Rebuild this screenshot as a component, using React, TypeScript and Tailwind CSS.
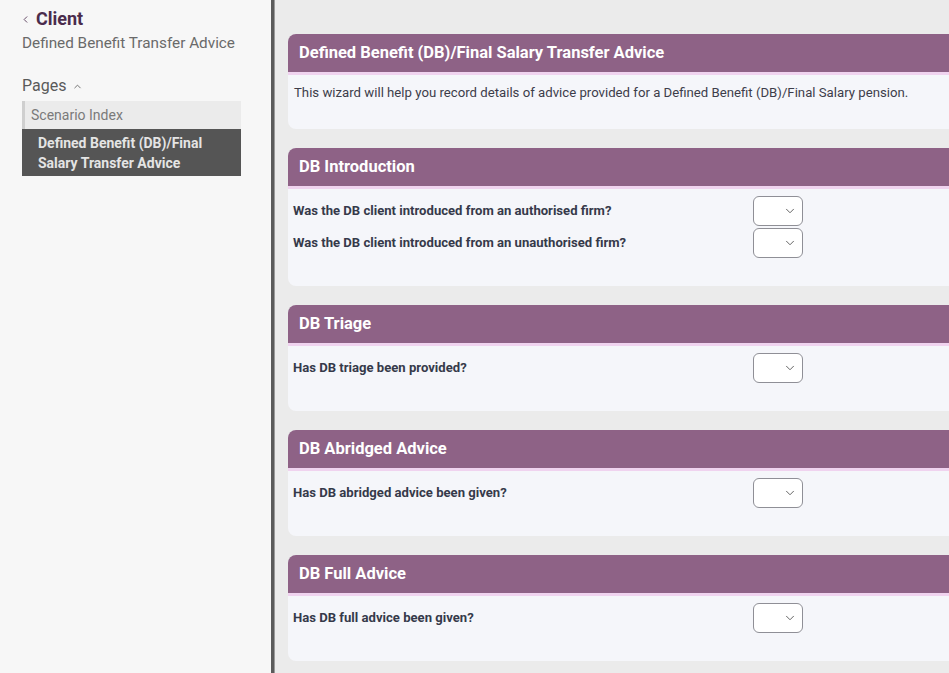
import { ChevronDown, ChevronLeft, ChevronUp } from "lucide-react";

const sections = [
  {
    title: "DB Introduction",
    questions: [
      "Was the DB client introduced from an authorised firm?",
      "Was the DB client introduced from an unauthorised firm?",
    ],
  },
  { title: "DB Triage", questions: ["Has DB triage been provided?"] },
  { title: "DB Abridged Advice", questions: ["Has DB abridged advice been given?"] },
  { title: "DB Full Advice", questions: ["Has DB full advice been given?"] },
];

function CardHeader({ title }: { title: string }) {
  return (
    <div className="box-content flex h-[38px] items-center rounded-t-lg border-b-[3px] border-[#f0d3ef] bg-[#8e6286] px-[11px]">
      <h2 className="text-[16.5px] font-bold text-white">{title}</h2>
    </div>
  );
}

function Select() {
  return (
    <div className="flex h-[30px] w-[50px] items-center justify-end rounded-md border border-[#8f8f96] bg-white pr-[5px]">
      <ChevronDown className="h-[14px] w-[14px] text-[#4f4f4f]" strokeWidth={1.5} />
    </div>
  );
}

export default function App() {
  return (
    <div className="flex h-[673px] w-[949px] overflow-hidden font-['Roboto',sans-serif]">
      <aside className="w-[271px] shrink-0 bg-[#f7f7f7] px-[22px] pt-[6px]">
        <div className="flex items-center gap-[5px] leading-[26px] text-[#4a2c4c]">
          <ChevronLeft className="h-[11px] w-[11px] -ml-[2px] text-[#5a3d5c]" strokeWidth={2} />
          <span className="text-[18px] font-bold">Client</span>
        </div>
        <p className="text-[15.3px] leading-[22px] text-[#6a6a6a]">Defined Benefit Transfer Advice</p>
        <div className="mt-[20px] flex items-center gap-[6px] text-[16px] leading-[24px] text-[#5a5a5a]">
          Pages <ChevronUp className="h-[11px] w-[11px] text-[#6a6a6a]" strokeWidth={2} />
        </div>
        <nav className="mt-[3px] w-[219px]">
          <div className="flex h-[28px] items-center border-l-[3px] border-[#cfcfcf] bg-[#ebebeb] pl-[6px] text-[14px] text-[#7a7a7a]">
            Scenario Index
          </div>
          <div className="bg-[#555555] px-[16px] pt-[4px] pb-[3px] text-[14px] font-bold leading-[20px] text-[#e4e4e4]">
            Defined Benefit (DB)/Final Salary Transfer Advice
          </div>
        </nav>
      </aside>
      <div className="w-[3px] shrink-0 bg-[#5b5b5b]" />
      <div className="w-[1px] shrink-0 bg-[#9a9a9a]" />
      <main className="flex-1 overflow-hidden bg-[#ebebeb] pl-[13px] pt-[34px]">
        <div className="flex w-[720px] flex-col gap-[19px]">
          <section className="rounded-lg bg-[#f5f6fa]">
            <CardHeader title="Defined Benefit (DB)/Final Salary Transfer Advice" />
            <p className="h-[54px] px-[6px] pt-[8px] text-[13.2px] text-[#3d3d4a]">
              This wizard will help you record details of advice provided for a Defined Benefit (DB)/Final Salary pension.
            </p>
          </section>
          {sections.map((s) => (
            <section key={s.title} className="rounded-lg bg-[#f5f6fa] pb-[28px]">
              <CardHeader title={s.title} />
              <div className="flex flex-col gap-[2px] px-[5px] pt-[7px]">
                {s.questions.map((q) => (
                  <div key={q} className="flex items-center">
                    <span className="w-[460px] text-[13.1px] font-bold text-[#363a4a]">{q}</span>
                    <Select />
                  </div>
                ))}
              </div>
            </section>
          ))}
        </div>
      </main>
    </div>
  );
}
